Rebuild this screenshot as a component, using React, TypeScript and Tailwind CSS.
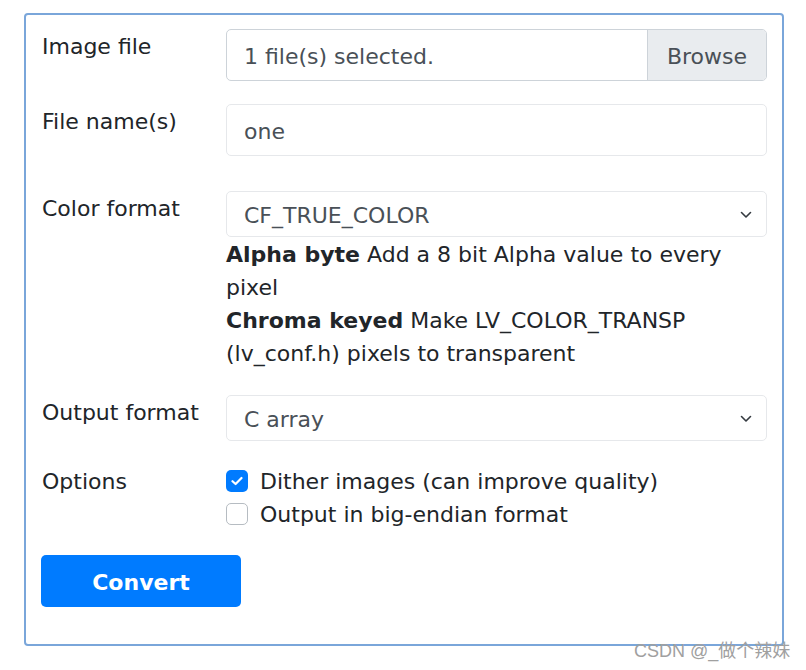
const font = "font-['DejaVu_Sans','Noto_Sans',sans-serif]"

const Chevron = () => (
  <svg width="12" height="8" viewBox="0 0 12 8" className="shrink-0">
    <path d="M1.5 1.5 L6 6 L10.5 1.5" fill="none" stroke="#343a40" strokeWidth="1.6" strokeLinecap="round" strokeLinejoin="round" />
  </svg>
)

const Checkbox = ({ checked }: { checked?: boolean }) =>
  checked ? (
    <span className="flex h-[22px] w-[22px] shrink-0 items-center justify-center rounded-[5px] bg-[#007bff]">
      <svg width="12" height="10" viewBox="0 0 12 10">
        <path d="M1.5 5.2 L4.6 8 L10.5 2" fill="none" stroke="#fff" strokeWidth="2.2" strokeLinecap="round" strokeLinejoin="round" />
      </svg>
    </span>
  ) : (
    <span className="h-[22px] w-[22px] shrink-0 rounded-[5px] border border-[#b6bcc2] bg-white" />
  )

const Row = ({ label, children, className = '' }: { label: string; children: React.ReactNode; className?: string }) => (
  <div className={`flex ${className}`}>
    <div className="w-[184px] shrink-0 pt-[1px] leading-[33px] text-[#212529]">{label}</div>
    <div className="min-w-0 flex-1">{children}</div>
  </div>
)

export default function App() {
  return (
    <div className={`relative h-[670px] w-[806px] bg-white ${font} text-[22px]`}>
      <div className="absolute left-[24px] top-[13px] h-[633px] w-[760px] rounded-[4px] border-2 border-[#7aa6da] pl-[16px] pr-[15px] pt-[14px]">
        <Row label="Image file">
          <div className="flex h-[52px] overflow-hidden rounded-[5px] border border-[#cdd3d9]">
            <div className="flex flex-1 items-center pl-[17px] pt-[2px] text-[#495057]">1 file(s) selected.</div>
            <div className="flex w-[119px] items-center justify-center border-l border-[#cdd3d9] bg-[#e9ecef] pt-[2px] text-[#495057]">
              Browse
            </div>
          </div>
        </Row>

        <Row label="File name(s)" className="mt-[23px]">
          <div className="flex h-[52px] items-center rounded-[5px] border border-[#e6e8eb] pl-[17px] pt-[2px] text-[#495057]">one</div>
        </Row>

        <Row label="Color format" className="mt-[35px]">
          <div className="flex h-[46px] items-center justify-between rounded-[5px] border border-[#e6e8eb] pl-[17px] pr-[14px] pt-[2px] text-[#495057]">
            <span>CF_TRUE_COLOR</span>
            <Chevron />
          </div>
          <p className="mt-[1px] leading-[33px] text-[#212529]">
            <b>Alpha byte</b> Add a 8 bit Alpha value to every pixel
            <br />
            <b>Chroma keyed</b> Make LV_COLOR_TRANSP (lv_conf.h) pixels to transparent
          </p>
        </Row>

        <Row label="Output format" className="mt-[25px]">
          <div className="flex h-[46px] items-center justify-between rounded-[5px] border border-[#e6e8eb] pl-[17px] pr-[14px] pt-[2px] text-[#495057]">
            <span>C array</span>
            <Chevron />
          </div>
        </Row>

        <Row label="Options" className="mt-[23px]">
          <div className="flex flex-col text-[#212529]">
            <label className="flex h-[33px] items-center gap-[12px]">
              <Checkbox checked />
              <span className="pt-[2px]">Dither images (can improve quality)</span>
            </label>
            <label className="flex h-[33px] items-center gap-[12px]">
              <Checkbox />
              <span className="pt-[2px]">Output in big-endian format</span>
            </label>
          </div>
        </Row>

        <button className="-ml-px mt-[25px] h-[52px] w-[200px] rounded-[5px] bg-[#007bff] pt-[2px] font-bold text-white">Convert</button>
      </div>

      <div className="absolute left-[634px] top-[640px] font-['Liberation_Sans','Noto_Sans_CJK_SC',sans-serif] text-[18px] leading-[22px] text-[#a0a0a0]">
        CSDN @_做个辣妹
      </div>
    </div>
  )
}
